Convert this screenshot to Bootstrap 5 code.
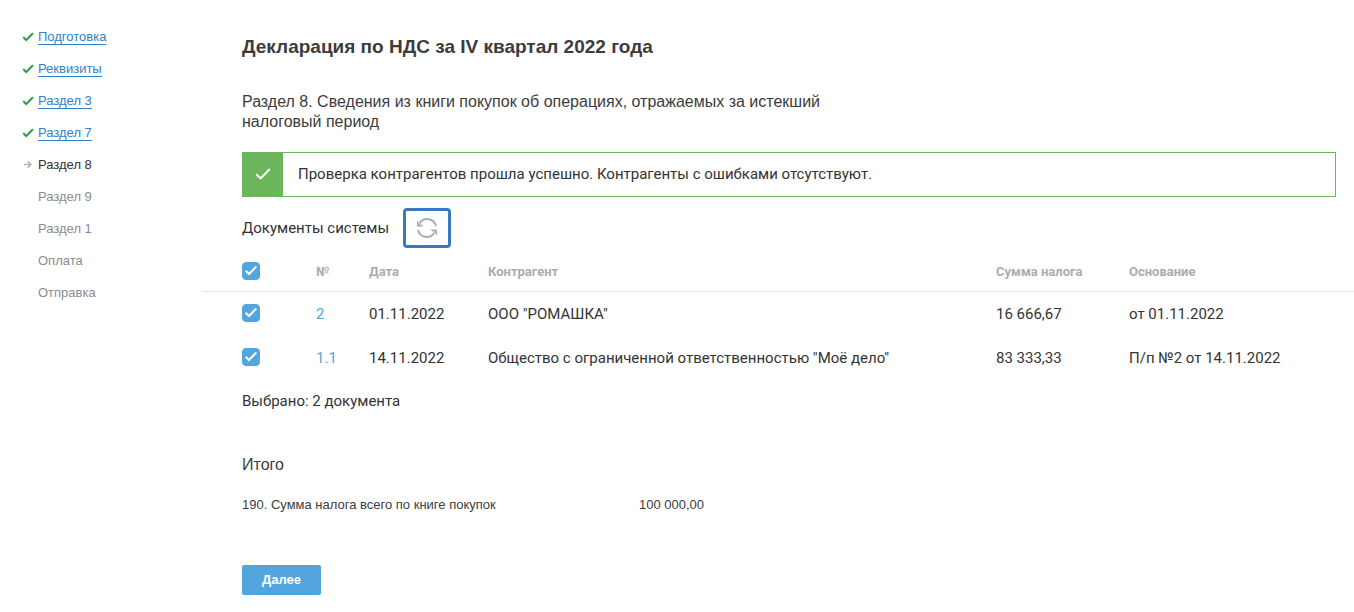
<!DOCTYPE html>
<html lang="ru">
<head>
<meta charset="utf-8">
<meta name="viewport" content="width=device-width, initial-scale=1">
<title>Декларация по НДС</title>
<link rel="stylesheet" href="https://cdn.jsdelivr.net/npm/bootstrap@5.3.0/dist/css/bootstrap.min.css">
<style>
  body { font-family: "Liberation Sans", Arial, sans-serif; font-size: 13px; line-height: 20px; color: #3c3c3c; background: #fff; }
  .wizard-nav { flex: 0 0 202px; padding: 21px 0 0 22px; }
  .wizard-nav li { display: flex; align-items: center; height: 32px; color: #8c8c8c; }
  .wizard-nav .step-icon { width: 16px; flex: none; display: flex; }
  .wizard-nav a { color: #3183c8; text-decoration: none; line-height: 15px; border-bottom: 1px solid #3183c8; }
  .wizard-nav .current { color: #333; }
  .wizard-main { min-width: 0; padding-top: 33px; }
  .block-inset { margin-left: 40px; margin-right: 18px; }
  h1 { font-size: 19px; line-height: 28px; font-weight: 700; margin-bottom: 31px; }
  h2 { font-size: 16px; line-height: 20px; font-weight: 400; margin-bottom: 0; }
  .section-title { max-width: 600px; }
  .ui-roboto { font-family: Roboto, sans-serif; font-size: 15px; color: #333; }
  .check-result { height: 45px; margin-top: 20px; border: 1px solid #6cb55a; }
  .check-result-icon { width: 40px; background: #6cb55a; }
  .check-result-icon, .check-result-text { padding-bottom: 2px; }
  .check-result-text { padding-left: 15px; }
  .docs-head { margin-top: 11px; gap: 14px; }
  .btn-refresh { width: 48px; height: 40px; padding: 0; border: 3px solid #3a78bf; border-radius: 4px; background: #fff; display: flex; align-items: center; justify-content: center; }
  .btn-refresh:hover { border-color: #3a78bf; }
  .docs-table { margin: 3px 0 0; table-layout: fixed; width: 100%; }
  .docs-table th { height: 40px; padding: 2px 0 0; font-size: 13px; font-weight: 700; color: #acacac; vertical-align: middle; border-bottom: 1px solid #e8e8e8; }
  .docs-table td { height: 44px; padding: 2px 0 0; vertical-align: middle; }
  .docs-table th:first-child, .docs-table td:first-child { padding-left: 40px; }
  .docs-table a { color: #52a5dd; text-decoration: none; }
  .docs-table .form-check-input { display: block; width: 18px; height: 18px; margin: 0 0 2px; border-radius: 4px; }
  .docs-table .form-check-input:checked { background-color: #52a5dd; border-color: #52a5dd; background-size: 18px 18px;
    background-image: url("data:image/svg+xml,%3Csvg xmlns='http://www.w3.org/2000/svg' viewBox='0 0 18 18'%3E%3Cpath d='M3.7 8.7l3.300 3.200 7.300-7.500' fill='none' stroke='%23fff' stroke-width='2.1'/%3E%3C/svg%3E"); }
  .total-title { margin-top: 44px; }
  .total-row { margin-top: 20px; }
  .total-row dt { width: 397px; font-weight: 400; }
  .btn-next { width: 79px; height: 30px; margin-top: 50px; padding: 0; border: 0; border-radius: 2px; background: #52a5dd; color: #fff; font-size: 13px; font-weight: 700; line-height: 30px; }
  .btn-next:hover { background: #4598d0; color: #fff; }
</style>
</head>
<body>
<svg class="d-none" aria-hidden="true">
  <symbol id="done" viewBox="0 0 12 10"><path d="M1.200 5l3 3L11 1.200" fill="none" stroke="#2f9e4a" stroke-width="2"/></symbol>
</svg>
<div class="d-flex">
  <nav class="wizard-nav" aria-label="Разделы декларации">
    <ul class="list-unstyled mb-0">
      <li><span class="step-icon"><svg width="12" height="10"><use href="#done"/></svg></span><a href="#">Подготовка</a></li>
      <li><span class="step-icon"><svg width="12" height="10"><use href="#done"/></svg></span><a href="#">Реквизиты</a></li>
      <li><span class="step-icon"><svg width="12" height="10"><use href="#done"/></svg></span><a href="#">Раздел 3</a></li>
      <li><span class="step-icon"><svg width="12" height="10"><use href="#done"/></svg></span><a href="#">Раздел 7</a></li>
      <li class="current"><span class="step-icon"><svg width="12" height="10" viewBox="0 0 12 10"><path d="M2 4.500h7M5.700 1.200L9 4.500 5.700 7.800" fill="none" stroke="#b0b0b0" stroke-width="1.4"/></svg></span>Раздел 8</li>
      <li><span class="step-icon"></span>Раздел 9</li>
      <li><span class="step-icon"></span>Раздел 1</li>
      <li><span class="step-icon"></span>Оплата</li>
      <li><span class="step-icon"></span>Отправка</li>
    </ul>
  </nav>

  <main class="wizard-main flex-grow-1">
    <div class="block-inset">
      <h1>Декларация по НДС за IV квартал 2022 года</h1>
      <h2 class="section-title">Раздел 8. Сведения из книги покупок об операциях, отражаемых за истекший налоговый период</h2>
      <div class="check-result ui-roboto d-flex" role="status">
        <div class="check-result-icon d-flex align-items-center justify-content-center">
          <svg width="16" height="14" viewBox="0 0 16 14"><path d="M1.2 7.200l4.400 4.200L14.800 2" fill="none" stroke="#fff" stroke-width="2"/></svg>
        </div>
        <div class="check-result-text d-flex align-items-center">Проверка контрагентов прошла успешно. Контрагенты с ошибками отсутствуют.</div>
      </div>
      <div class="docs-head ui-roboto d-flex align-items-center">
        <span>Документы системы</span>
        <button type="button" class="btn btn-refresh" aria-label="Обновить">
          <svg width="22" height="22" viewBox="0 0 22 22"><g fill="none" stroke="#adadad" stroke-width="2"><path d="M3.500 6.500A9 9 0 0 1 20 9"/><path d="M18.500 15.500A9 9 0 0 1 2 13"/></g><path d="M1 3v6.500h6.500L5.500 7.400H3.400zM21 19v-6.500h-6.500l2 2.100h2.100z" fill="#adadad"/></svg>
        </button>
      </div>
    </div>

    <table class="docs-table ui-roboto">
      <colgroup><col style="width:114px"><col style="width:53px"><col style="width:119px"><col><col style="width:133px"><col style="width:225px"></colgroup>
      <thead>
        <tr><th><input class="form-check-input" type="checkbox" checked aria-label="Выбрать все"></th><th>№</th><th>Дата</th><th>Контрагент</th><th>Сумма налога</th><th>Основание</th></tr>
      </thead>
      <tbody>
        <tr><td><input class="form-check-input" type="checkbox" checked aria-label="Документ 2"></td><td><a href="#">2</a></td><td>01.11.2022</td><td>ООО "РОМАШКА"</td><td>16 666,67</td><td>от 01.11.2022</td></tr>
        <tr><td><input class="form-check-input" type="checkbox" checked aria-label="Документ 1.1"></td><td><a href="#">1.1</a></td><td>14.11.2022</td><td>Общество с ограниченной ответственностью "Моё дело"</td><td>83 333,33</td><td>П/п №2 от 14.11.2022</td></tr>
      </tbody>
    </table>

    <div class="block-inset">
      <p class="ui-roboto pt-2 mt-1 mb-0">Выбрано: 2 документа</p>
      <h2 class="total-title">Итого</h2>
      <dl class="total-row d-flex mb-0"><dt>190. Сумма налога всего по книге покупок</dt><dd class="mb-0">100 000,00</dd></dl>
      <button type="button" class="btn btn-next">Далее</button>
    </div>
  </main>
</div>
<script src="https://cdn.jsdelivr.net/npm/bootstrap@5.3.0/dist/js/bootstrap.bundle.min.js"></script>
</body>
</html>
